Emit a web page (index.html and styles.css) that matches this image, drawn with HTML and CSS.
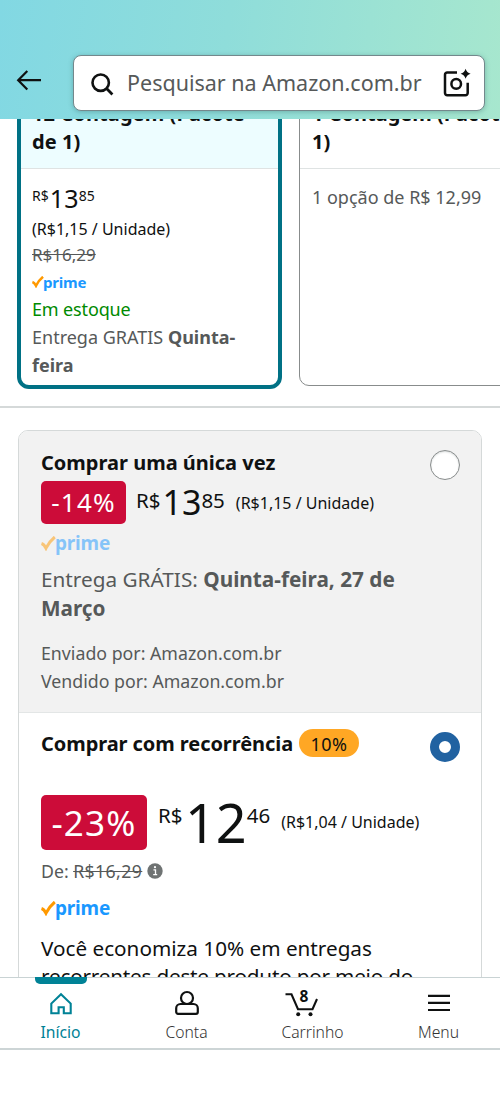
FILE: index.html
```html
<!DOCTYPE html>
<html lang="pt-BR">
<head>
<meta charset="utf-8">
<meta name="viewport" content="width=device-width">
<title>Amazon.com.br</title>
<link rel="stylesheet" href="styles.css">
</head>
<body>
<header class="top">
  <svg class="back" width="26" height="22" viewBox="0 0 26 22"><path d="M11.3 2 2.2 11.2l9.1 9.2M2.5 11.2H25" fill="none" stroke="#0f1111" stroke-width="2.2"/></svg>
  <div class="search">
    <svg class="lens" width="26" height="26" viewBox="0 0 26 26"><circle cx="11.7" cy="11.7" r="8.2" fill="none" stroke="#0f1111" stroke-width="2.6"/><path d="m17.6 17.6 5.800 5.800" stroke="#0f1111" stroke-width="2.8"/></svg>
    <span class="hint">Pesquisar na Amazon.com.br</span>
    <svg class="camera" width="30" height="30" viewBox="0 0 30 30"><g fill="none" stroke="#0f1111" stroke-width="2.5"><path d="M16 4.500H6.200A2.200 2.200 0 0 0 4 6.700V25A2.200 2.200 0 0 0 6.200 27.200H24.500a2.200 2.200 0 0 0 2.200-2.200V14.800"/><circle cx="15.200" cy="15.900" r="4.800"/></g><path d="M24.600 .8q1.100 4 5 5-3.900 1.100-5 5-1.100-3.900-5-5 3.900-1 5-5Z" fill="#0f1111"/></svg>
  </div>
</header>

<main class="page">
  <section class="options">
    <article class="option selected">
      <h3>12 Contagem (Pacote de 1)</h3>
      <div class="details">
        <div class="price small"><span class="sup">R$</span><span class="whole">13</span><span class="sup">85</span></div>
        <div class="per-unit">(R$1,15 / Unidade)</div>
        <div class="list-price"><s>R$16,29</s></div>
        <div class="prime prime-small"><svg width="12" height="12" viewBox="0 0 15 15"><path d="M.5 7.500q2.500.8 4.500 4.700Q8.300 5.500 13.800 1" fill="none" stroke="#ff9900" stroke-width="3.200"/></svg>prime</div>
        <div class="stock">Em estoque</div>
        <div class="delivery">Entrega GRATIS <b>Quinta-feira</b></div>
      </div>
    </article>
    <article class="option other">
      <h3>1 Contagem (Pacote de 1)</h3>
      <div class="details">1 opção de R$ 12,99</div>
    </article>
  </section>

  <section class="buybox">
    <div class="choice once">
      <span class="radio"></span>
      <h2>Comprar uma única vez</h2>
      <div class="price-row"><span class="badge">-14%</span><div class="price medium"><span class="sup">R$</span><span class="whole">13</span><span class="sup">85</span><span class="unit">(R$1,15 / Unidade)</span></div></div>
      <div class="prime"><svg width="15" height="15" viewBox="0 0 15 15"><path d="M.5 7.500q2.500.8 4.500 4.700Q8.300 5.500 13.800 1" fill="none" stroke="#ff9900" stroke-width="3"/></svg>prime</div>
      <p class="when">Entrega GRÁTIS: <b>Quinta-feira, 27 de Março</b></p>
      <p class="seller">Enviado por: Amazon.com.br<br>Vendido por: Amazon.com.br</p>
    </div>
    <div class="choice recurring">
      <span class="radio on"></span>
      <h2>Comprar com recorrência<span class="pill">10%</span></h2>
      <div class="price-row"><span class="badge">-23%</span><div class="price large"><span class="sup">R$</span><span class="whole">12</span><span class="sup">46</span><span class="unit">(R$1,04 / Unidade)</span></div></div>
      <div class="was">De: <s>R$16,29</s><svg width="16" height="16" viewBox="0 0 16 16"><circle cx="8" cy="8" r="7.700" fill="#6f7373"/><path d="M6.500 6.800h2v4.800M6.200 11.700h4" fill="none" stroke="#fff" stroke-width="1.300"/><circle cx="8" cy="4.200" r="1.100" fill="#fff"/></svg></div>
      <div class="prime"><svg width="15" height="15" viewBox="0 0 15 15"><path d="M.5 7.500q2.500.8 4.500 4.700Q8.300 5.500 13.800 1" fill="none" stroke="#ff9900" stroke-width="3"/></svg>prime</div>
      <p class="saving">Você economiza 10% em entregas <span class="tight">recorrentes deste produto por meio do</span></p>
    </div>
  </section>
</main>

<nav class="tabs">
  <a class="tab active"><svg width="36" height="30" viewBox="0 0 36 30"><path d="M8.300 24.200V14.600L18 5.200l9.700 9.400v9.600h-6.900v-6h-5.200v6Z" fill="none" stroke="currentColor" stroke-width="2.100"/></svg><span>Início</span></a>
  <a class="tab"><svg width="36" height="30" viewBox="0 0 36 30"><g fill="none" stroke="#0f1111" stroke-width="2.200"><circle cx="18" cy="9" r="6"/><path d="M11.500 15a4.300 4.300 0 0 0-4.300 4.300V23a1.800 1.800 0 0 0 1.800 1.800h18a1.800 1.800 0 0 0 1.800-1.800v-3.700a4.300 4.300 0 0 0-4.300-4.300Z"/></g></svg><span>Conta</span></a>
  <a class="tab cart"><svg width="36" height="30" viewBox="0 0 36 30"><path d="M.5 5.300h6L13 20.200H27.500L32 10" fill="none" stroke="#0f1111" stroke-width="2.100"/><circle cx="13.200" cy="25.300" r="2" fill="#0f1111"/><circle cx="25.500" cy="25.300" r="2" fill="#0f1111"/></svg><i class="count">8</i><span>Carrinho</span></a>
  <a class="tab"><svg width="36" height="30" viewBox="0 0 36 30"><path d="M7 6.800h22M7 13.900h22M7 21h22" stroke="#0f1111" stroke-width="2.200"/></svg><span>Menu</span></a>
</nav>
</body>
</html>
```
FILE: styles.css
```css
* { box-sizing: border-box; }
body {
  margin: 0;
  background: #fff;
  color: #0f1111;
  font-family: "Noto Sans", "Open Sans", sans-serif;
  height: 1111px;
  overflow: hidden;
}
h2, h3, p { margin: 0; }
svg { display: block; flex: none; }

.top {
  height: 119px;
  padding: 55px 15.500px 0 16px;
  display: flex;
  align-items: flex-start;
  background: linear-gradient(97deg, #82d8e3 0%, #8fddda 45%, #a7e7ce 100%);
}
.back { margin: 14px 30.500px 0 0; }
.search {
  flex: 1;
  height: 56px;
  display: flex;
  align-items: center;
  border: 1px solid #74888c;
  border-radius: 8px;
  background: #fff;
  box-shadow: 0 1px 5px rgba(40, 90, 90, .35);
}
.lens { margin: 1px 0 0 15px; }
.hint {
  flex: 1;
  padding-left: 12.500px;
  font-size: 21.500px;
  line-height: 30px;
  color: #565959;
  white-space: nowrap;
}
.camera { margin-right: 13px; }

.page { height: 858px; overflow: hidden; display: flow-root; }
.options {
  display: flex;
  align-items: flex-start;
  gap: 16.500px;
  margin-top: -30px;
  padding-left: 17px;
  height: 318.500px;
  border-bottom: 2px solid #d5d9d9;
  overflow: hidden;
}
.option { flex: none; border-radius: 12px; overflow: hidden; color: #565959; font-size: 18px; }
.selected { width: 265px; height: 299.500px; border: 4px solid #007185; }
.other { width: 265px; height: 297px; border: 1px solid #888c8c; border-radius: 10px; }
.option h3 {
  height: 76px;
  padding: 6.500px 11px 0;
  font-size: 20px;
  line-height: 28.500px;
  font-weight: 700;
  color: #0f1111;
  border-bottom: 1px solid #dfe3e3;
}
.selected h3 { background: #edfdff; letter-spacing: .1px; }
.other h3 { height: 79px; padding: 9.500px 12.500px 0; }
.details { padding: 15px 11px 0; }
.other .details { padding: 13.500px 12.500px 0; line-height: 28px; }

.price { white-space: nowrap; color: #0f1111; }
.sup { line-height: 0; }
.small { font-size: 25px; line-height: 28px; }
.small .whole { letter-spacing: .2px; margin-left: 1px; }
.small .sup { font-size: 14px; vertical-align: 7px; }
.per-unit { margin-top: 5px; font-size: 16px; line-height: 25.500px; color: #0f1111; }
.list-price { margin-top: -1px; font-size: 17px; line-height: 26px; }
.stock { color: #008a00; line-height: 22px; letter-spacing: -.15px; }
.delivery { margin-top: 3px; line-height: 28px; width: 218px; }

.prime {
  display: flex;
  align-items: center;
  height: 28px;
  font-size: 19px;
  font-weight: 700;
  line-height: 28px;
  letter-spacing: -.2px;
  color: #1a98ff;
}
.prime svg { margin-top: 1px; margin-right: -1px; }
.prime-small { height: 30.500px; padding-bottom: 2px; font-size: 15px; letter-spacing: -.2px; }

.buybox {
  margin: 22.500px 18px 0;
  border: 1px solid #d5d9d9;
  border-radius: 10px;
  overflow: hidden;
}
.choice { position: relative; padding: 0 22px; }
.once { height: 282px; padding-top: 17.500px; background: #f2f2f2; border-bottom: 1px solid #e3e6e6; }
.recurring { padding-top: 16.500px; height: 300px; }
.choice h2 { font-size: 20px; line-height: 28px; font-weight: 700; display: flex; }
.recurring h2 { letter-spacing: -.07px; }
.radio {
  position: absolute;
  right: 21.500px;
  top: 19px;
  width: 30px;
  height: 30px;
  border: 1.500px solid #888c8c;
  border-radius: 50%;
  background: #fff;
  box-shadow: inset 0 1px 2px #d5d9d9;
}
.radio.on { top: 18.500px; border: 9px solid #2162a1; box-shadow: none; }
.pill {
  width: 60px;
  height: 28px;
  margin: -1px 0 1px 6px;
  border-radius: 14px;
  background: #ffa724;
  font-size: 18px;
  line-height: 30px;
  font-weight: 400;
  letter-spacing: .5px;
  text-align: center;
}
.price-row { display: flex; margin-top: 4.500px; }
.badge {
  flex: none;
  width: 85px;
  border-radius: 5px;
  background: #cc0c39;
  color: #fff;
  font-size: 26px;
  line-height: 43px;
  letter-spacing: 1.200px;
  text-align: center;
}
.medium { margin-left: 10px; font-size: 34px; line-height: 43px; height: 43px; }
.medium .sup, .large .sup { font-size: 20.500px; }
.medium .sup { vertical-align: 7px; }
.medium .whole { margin-left: 2px; }
.unit { font-size: 16px; line-height: 0; margin-left: 11px; }
.medium .unit { vertical-align: 6px; }
.once .prime { margin-top: 5px; opacity: .5; }
.when { margin-top: 8px; font-size: 20.750px; line-height: 28.800px; color: #565959; }
.seller { margin-top: 16px; font-size: 17.750px; line-height: 28.800px; color: #565959; }

.recurring .price-row { margin-top: 37px; }
.recurring .badge { width: 106px; font-size: 35px; line-height: 55px; }
.large { margin-left: 11px; font-size: 54px; line-height: 54px; height: 55px; }
.large .sup { vertical-align: 20px; }
.large .whole { margin-left: 2.500px; }
.large .unit { vertical-align: 15px; }
.was {
  display: flex;
  align-items: center;
  margin-top: 7px;
  font-size: 17.700px;
  line-height: 28px;
  color: #565959;
}
.was s { margin: 0 5px 0 4.500px; letter-spacing: .4px; }
.recurring .prime { margin-top: 9px; }
.saving { margin-top: 12px; font-size: 20.700px; line-height: 28.800px; }
.tight { letter-spacing: -.2px; }

.tabs {
  display: grid;
  grid-template-columns: repeat(4, 126px);
  justify-content: center;
  height: 73px;
  padding-right: 1px;
  border-top: 1px solid #c9d3d4;
  border-bottom: 2px solid #cdd5d6;
  background: #fff;
}
.tab {
  position: relative;
  display: flex;
  flex-direction: column;
  align-items: center;
  padding-top: 10.500px;
  font-size: 15.700px;
  line-height: 26px;
  font-weight: 300;
  color: #333;
}
.active { color: #008296; font-weight: 400; }
.active::before {
  content: "";
  position: absolute;
  top: -1px;
  left: 37px;
  width: 52px;
  height: 7px;
  border-radius: 0 0 5px 5px;
  background: #008296;
}
.cart svg { margin-left: -19px; }
.count {
  position: absolute;
  top: 10px;
  left: 50px;
  font: 700 15.500px/16px "Noto Sans", sans-serif;
  color: #0f1111;
}
```
